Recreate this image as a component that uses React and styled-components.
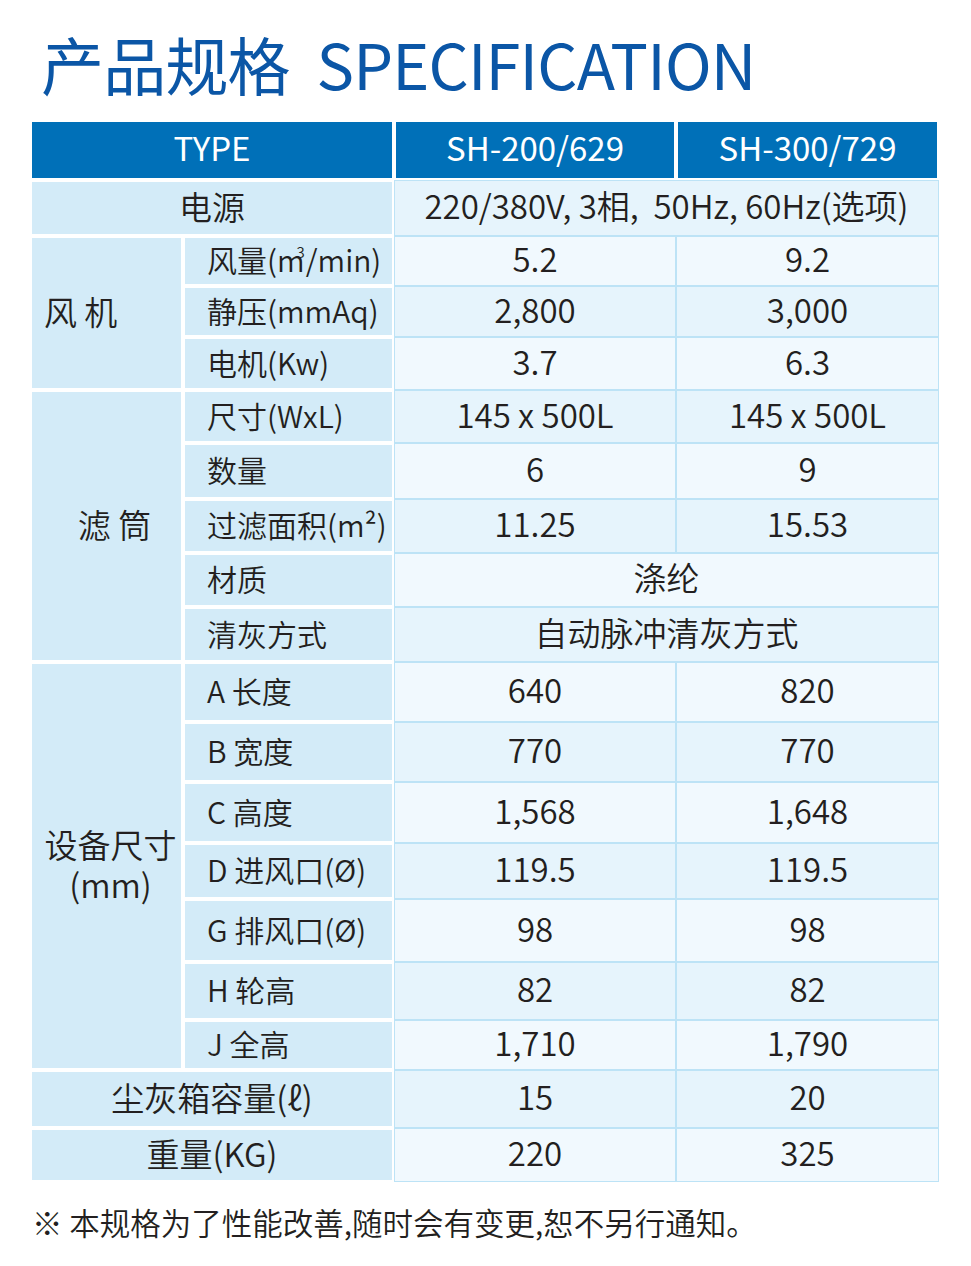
import React from 'react';
import styled, { createGlobalStyle } from 'styled-components';

const GlobalStyle = createGlobalStyle`
  body {
    margin: 0;
    background: #fff;
    font-family: "Noto Sans CJK SC", "Noto Sans", sans-serif;
  }
`;

const Page = styled.div`
  width: 971px;
  padding: 22px 0 0 30px;
  box-sizing: border-box;
`;

const Title = styled.h1`
  margin: 0 0 0 11px;
  height: 98px;
  font-size: 63px;
  line-height: 82px;
  font-weight: 400;
  color: #0b56a6;
  letter-spacing: -0.8px;
  white-space: pre;
`;

const Table = styled.div`
  display: grid;
  grid-template-columns: 153px 211px 282px 263px;
  grid-template-rows: 60px 56px 50px 51px 53px 53px 56px 54px 54px 55px 60px 60px 61px 56px 63px 58px 50px 58px 54px;
`;

const Cell = styled.div`
  display: flex;
  flex-direction: column;
  justify-content: center;
  box-sizing: border-box;
  grid-column: span ${p => p.cols || 1};
  grid-row: span ${p => p.rows || 1};
  font-size: 30px;
  font-weight: 350;
  color: #231f20;
  white-space: nowrap;
  line-height: 1.2;
  padding-bottom: 4px;
`;

const HeadCell = styled(Cell)`
  align-items: center;
  background: #0070b8;
  border: 2px solid #fff;
  color: #fff;
  font-size: 33px;
  font-weight: 400;
`;

const Label = styled(Cell)`
  background: #d3ebf8;
  border: 2px solid #fff;
  align-items: ${p => (p.left ? 'flex-start' : 'center')};
  padding-left: ${p => p.pad || 0}px;
  font-size: ${p => p.size || 30}px;
  line-height: ${p => (p.size ? '40px' : 1.2)};
`;

const Value = styled(Cell)`
  align-items: center;
  background: ${p => (p.dark ? '#e6f4fc' : '#f1f9fe')};
  border: 1px solid #bde3f6;
  font-size: 33px;
`;

const Sup = styled.span`
  display: inline-block;
  font-size: 15px;
  line-height: 1;
  vertical-align: 14px;
  margin-left: -8px;
  margin-right: 1px;
`;

const Note = styled.p`
  margin: 18px 0 0 2px;
  font-size: 30.5px;
  font-weight: 350;
  color: #231f20;
`;

const body = [
  { sub: <>风量(m<Sup>3</Sup>/min)</>, a: '5.2', b: '9.2' },
  { sub: '静压(mmAq)', a: '2,800', b: '3,000' },
  { sub: '电机(Kw)', a: '3.7', b: '6.3' },
  { sub: '尺寸(WxL)', a: '145 x 500L', b: '145 x 500L' },
  { sub: '数量', a: '6', b: '9' },
  { sub: '过滤面积(m²)', a: '11.25', b: '15.53' },
  { sub: '材质', all: '涤纶' },
  { sub: '清灰方式', all: '自动脉冲清灰方式' },
  { sub: 'A 长度', a: '640', b: '820' },
  { sub: 'B 宽度', a: '770', b: '770' },
  { sub: 'C 高度', a: '1,568', b: '1,648' },
  { sub: 'D 进风口(Ø)', a: '119.5', b: '119.5' },
  { sub: 'G 排风口(Ø)', a: '98', b: '98' },
  { sub: 'H 轮高', a: '82', b: '82' },
  { sub: 'J 全高', a: '1,710', b: '1,790' },
];

const groups = {
  0: { rows: 3, text: ['风 机'], left: true, pad: 12 },
  3: { rows: 5, text: ['滤 筒'], pad: 16 },
  8: { rows: 7, text: ['设备尺寸', '(mm)'], pad: 8 },
};

const App = () => {
  return (
    <Page>
      <GlobalStyle />
      <Title>{'产品规格  SPECIFICATION'}</Title>
      <Table>
        <HeadCell cols={2}>TYPE</HeadCell>
        <HeadCell>SH-200/629</HeadCell>
        <HeadCell>SH-300/729</HeadCell>

        <Label cols={2} size={33}>电源</Label>
        <Value cols={2} dark>220/380V, 3相,&nbsp; 50Hz, 60Hz(选项)</Value>

        {body.map((r, i) => {
          const g = groups[i];
          const dark = i % 2 === 1;
          return (
            <React.Fragment key={i}>
              {g && (
                <Label rows={g.rows} left={g.left} pad={g.pad} size={33}>
                  {g.text.map(t => (
                    <span key={t}>{t}</span>
                  ))}
                </Label>
              )}
              <Label left pad={22}>
                <span>{r.sub}</span>
              </Label>
              {r.all ? (
                <Value cols={2} dark={dark}>{r.all}</Value>
              ) : (
                <>
                  <Value dark={dark}>{r.a}</Value>
                  <Value dark={dark}>{r.b}</Value>
                </>
              )}
            </React.Fragment>
          );
        })}

        <Label cols={2} size={33}>尘灰箱容量(ℓ)</Label>
        <Value dark>15</Value>
        <Value dark>20</Value>

        <Label cols={2} size={33} pad={0}>重量(KG)</Label>
        <Value>220</Value>
        <Value>325</Value>
      </Table>
      <Note>※ 本规格为了性能改善,随时会有变更,恕不另行通知。</Note>
    </Page>
  );
};

export default App;
